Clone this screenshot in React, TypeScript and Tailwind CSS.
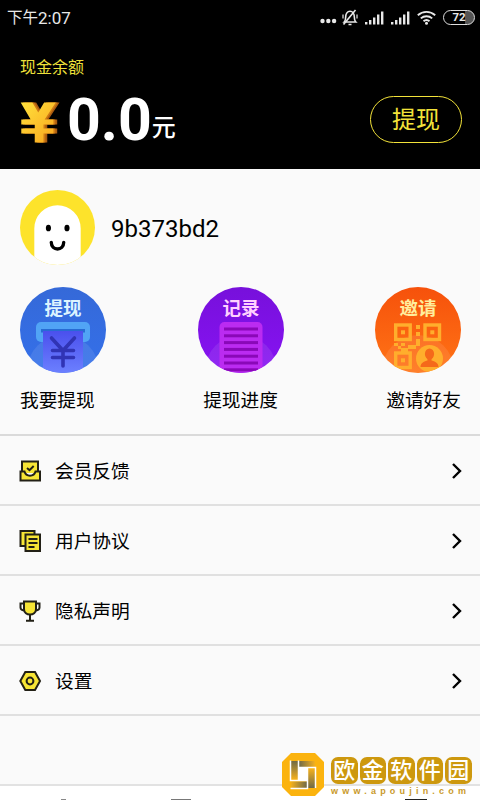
import React from "react";

const FONT = "font-[Roboto,'Noto_Sans_CJK_SC',sans-serif]";

function StatusBar() {
  return (
    <div className="flex h-9 items-center justify-between pl-[7px] pr-[5px] text-[#e8e8e8]">
      <span className="flex items-center text-[17px] leading-none">
        <span className="pt-px text-[15.5px]">下午</span>2:07
      </span>
      <div className="flex items-center pb-[2px]">
        <svg className="mt-[7px] h-[6px] w-[17px]" viewBox="0 0 17 6" fill="currentColor">
          <circle cx="2.5" cy="3" r="2.2" />
          <circle cx="8.3" cy="3" r="2.2" />
          <circle cx="14.1" cy="3" r="2.2" />
        </svg>
        <BellOff />
        <Signal />
        <Signal />
        <Wifi />
        <div className="flex h-[15px] w-[32px] items-center justify-center rounded-full border-[1.5px] border-[#dedede] bg-gradient-to-r from-black from-70% to-[#555] to-70% pt-px text-[11.5px] font-bold leading-none">
          72
        </div>
      </div>
    </div>
  );
}

function BellOff() {
  return (
    <svg className="ml-1 mr-[6px] h-[17px] w-[18px]" viewBox="0 0 18 17" fill="none" stroke="currentColor" strokeWidth="1.6">
      <path d="M3.2 13c1.400-1.400 1.500-3 1.500-5.200C4.700 4.700 6.400 2.300 9 2.300s4.300 2.400 4.300 5.500c0 2.200 .1 3.800 1.500 5.200zM7.500 15.500h3" />
      <path d="M14.500 1L2.500 15.500" strokeWidth="1.600" />
      <path d="M2 5.500v4M16 5.500v4" stroke="#8b8b8b" strokeWidth="2" />
    </svg>
  );
}

function Signal() {
  return (
    <svg className="mr-[7px] h-[15px] w-[19px]" viewBox="0 0 19 15" fill="currentColor">
      <rect x="0" y="12" width="2.4" height="2.5" />
      <rect x="4" y="10" width="2.4" height="4.5" />
      <rect x="8" y="7.5" width="2.4" height="7" />
      <rect x="12" y="4.5" width="2.4" height="10" />
      <rect x="16" y="1.5" width="2.4" height="13" />
    </svg>
  );
}

function Wifi() {
  return (
    <svg className="mr-[7px] h-[15px] w-[19px]" viewBox="0 0 19 15" fill="none" stroke="currentColor" strokeWidth="1.9">
      <path d="M.8 5.200c5-4.400 12.400-4.400 17.400 0M3.800 8.400c3.300-2.900 8.100-2.900 11.400 0M6.500 11.300c1.700-1.500 4.300-1.500 6 0" />
      <circle cx="9.5" cy="13.2" r="1.5" fill="currentColor" stroke="none" />
    </svg>
  );
}

function YuanIcon() {
  const shape = "M0 0h10l5 10L20 0h10l-9.500 17H28v5H19.500v4H28v5h-8.500v9H12v-9H.5v-5H12v-4H.5v-5h8z";
  return (
    <svg className="h-[41px] w-[40px]" viewBox="0 0 40 41">
      <defs>
        <linearGradient id="yuan" x1="0" y1="0" x2="1" y2="1">
          <stop offset="0" stopColor="#ffe13c" />
          <stop offset="1" stopColor="#f9a51d" />
        </linearGradient>
      </defs>
      <g transform="translate(.7 .5) scale(1.17 1)">
        <path d={shape} transform="translate(3.2 0)" fill="#a95b10" />
        <path d={shape} transform="translate(1.6 0)" fill="#cf7a14" />
        <path d={shape} fill="url(#yuan)" />
      </g>
    </svg>
  );
}

function Avatar() {
  return (
    <svg className="size-[75px]" viewBox="0 0 76 76">
      <clipPath id="face">
        <circle cx="38" cy="38" r="38" />
      </clipPath>
      <g clipPath="url(#face)">
        <rect width="76" height="76" fill="#fde32b" />
        <path d="M14.500 77V39a23.500 23.500 0 0 1 47 0v38z" fill="#fff" />
      </g>
      <ellipse cx="28.8" cy="38.5" rx="2.6" ry="3.4" />
      <ellipse cx="47.6" cy="38.5" rx="2.6" ry="3.4" />
      <path d="M31.700 53c0 9 12.600 9 12.600 0" fill="none" stroke="#000" strokeWidth="3.4" strokeLinecap="round" />
    </svg>
  );
}

interface DiscProps {
  id: string;
  from: string;
  to: string;
  title: string;
  titleColor: string;
  children: React.ReactNode;
}

function Disc({ id, from, to, title, titleColor, children }: DiscProps) {
  return (
    <svg className="size-[86px]" viewBox="0 0 86 86">
      <defs>
        <linearGradient id={id} x1="0" y1="0" x2="0" y2="1">
          <stop offset="0" stopColor={from} />
          <stop offset="1" stopColor={to} />
        </linearGradient>
        <clipPath id={`${id}-clip`}>
          <circle cx="43" cy="43" r="43" />
        </clipPath>
      </defs>
      <g clipPath={`url(#${id}-clip)`}>
        <rect width="86" height="86" fill={`url(#${id})`} />
        <circle cx="43" cy="84" r="36" fill="#fff" opacity=".09" />
        {children}
      </g>
      <text x="43" y="27.5" textAnchor="middle" fontSize="18.5" fontWeight="700" fill={titleColor}>
        {title}
      </text>
    </svg>
  );
}

function WithdrawDisc() {
  return (
    <Disc id="withdraw" from="#3569d8" to="#3470ea" title="提现" titleColor="#dcf3ff">
      <rect x="16" y="35" width="54" height="20" rx="5" fill="#51a4f5" />
      <rect x="21" y="42" width="44" height="3.5" fill="#276bd4" />
      <defs>
        <linearGradient id="slip" x1="0" y1="0" x2="0" y2="1">
          <stop offset="0" stopColor="#4a50ed" />
          <stop offset="1" stopColor="#6c80ff" />
        </linearGradient>
      </defs>
      <rect x="23" y="44" width="40" height="42" fill="url(#slip)" />
      <path d="M31.500 51L43 63.500 54.500 51M32.500 63.500h21M32.500 70.500h21M43 63.500V79" fill="none" stroke="#3034b5" strokeWidth="3.6" strokeLinecap="round" />
    </Disc>
  );
}

function RecordDisc() {
  return (
    <Disc id="record" from="#7710db" to="#8713f3" title="记录" titleColor="#ffd0ff">
      <rect x="21.5" y="35" width="43" height="60" rx="5" fill="#bb2bf1" />
      {[40.5, 47.3, 54.1, 60.9, 67.7, 74.5, 81.3].map((y) => (
        <rect key={y} x="26" y={y} width="34" height="3" fill="#8a08b8" />
      ))}
    </Disc>
  );
}

function InviteDisc() {
  return (
    <Disc id="invite" from="#f6510b" to="#ff7416" title="邀请" titleColor="#ffed9c">
      <g fill="none" stroke="#ffae2c" strokeWidth="3.4">
        <rect x="20.7" y="38" width="14.5" height="14.5" />
        <rect x="50" y="38" width="14.5" height="14.5" />
        <rect x="20.7" y="66" width="14.5" height="14.5" />
      </g>
      <g fill="#ffae2c">
        <rect x="26" y="43.3" width="4" height="4" />
        <rect x="55.3" y="43.3" width="4" height="4" />
        <rect x="26" y="71.3" width="4" height="4" />
        <path d="M41 38h4v4h-4zM41 45h4v4h-4zM41 52h4v7h-4zM19 56h4v3h-4zM26 56h4v3h-4zM23 59h3v3h-3zM33 58h8v4h-8zM26 61h7v4h-7z" />
      </g>
      <circle cx="54.5" cy="71.5" r="13.5" fill="#ffae2c" />
      <ellipse cx="54.5" cy="67" rx="4.6" ry="5.6" fill="#f5691a" />
      <path d="M45.500 80c0-4 4-6 7-6.500v-3h4v3c3 .5 7 2.500 7 6.500z" fill="#f5691a" />
    </Disc>
  );
}

const actions = [
  { label: "我要提现", icon: <WithdrawDisc />, align: "items-start" },
  { label: "提现进度", icon: <RecordDisc />, align: "items-center" },
  { label: "邀请好友", icon: <InviteDisc />, align: "items-end" },
];

const menu = [
  {
    label: "会员反馈",
    icon: (
      <>
        <path d="M3 13V1.500h16V13" />
        <path d="M1.500 11.500h4c1.500 5.500 9.500 5.500 11 0h4.500v9H1.500z" />
        <path d="M8 8l2.500 2.200 4.200-4.200" fill="none" />
      </>
    ),
  },
  {
    label: "用户协议",
    icon: (
      <>
        <path d="M1.500 1h14v15h-14z" />
        <path d="M6.500 4.500H21v16.500H6.500z" />
        <path d="M9.500 9h9M9.500 13h9M9.500 17h6" />
      </>
    ),
  },
  {
    label: "隐私声明",
    icon: (
      <>
        <path d="M5 3.500H1.500v4c0 2 2 3 5 3M17 3.500h3.500v4c0 2-2 3-5 3" fill="none" />
        <path d="M5 1.500h12v7.500c0 7.300-12 7.300-12 0z" />
        <path d="M11 14.500v6.200M7 20.700h8" />
      </>
    ),
  },
  {
    label: "设置",
    icon: (
      <>
        <path d="M6.300 2h9.700L21 11l-5 9H6.300L1.300 11z" />
        <circle cx="11" cy="11" r="3.4" />
      </>
    ),
  },
];

function Watermark() {
  return (
    <div className="absolute left-[281px] top-[752px] flex gap-[6px]">
      <svg className="h-[45px] w-[44px]" viewBox="0 0 44 45">
        <defs>
          <linearGradient id="shade-right">
            <stop offset="0" stopColor="#6f6a48" />
            <stop offset="1" stopColor="#f3b01e" />
          </linearGradient>
          <linearGradient id="shade-left">
            <stop offset="0" stopColor="#f3b01e" />
            <stop offset="1" stopColor="#6f6a48" />
          </linearGradient>
          <linearGradient id="shade-down" x1="0" y1="0" x2="0" y2="1">
            <stop offset="0" stopColor="#6f6a48" />
            <stop offset="1" stopColor="#f3b01e" />
          </linearGradient>
          <linearGradient id="shade-up" x1="0" y1="0" x2="0" y2="1">
            <stop offset="0" stopColor="#f3b01e" />
            <stop offset="1" stopColor="#6f6a48" />
          </linearGradient>
        </defs>
        <path d="M10 1h24l9 9v25l-9 9H10l-9-9V10z" fill="#fbb30e" />
        <path d="M18 15h8v14h-8z" fill="#fff" />
        <rect x="10" y="9" width="7" height="18" fill="url(#shade-down)" />
        <rect x="18" y="9" width="16" height="6" fill="url(#shade-right)" />
        <rect x="27" y="17" width="7" height="19" fill="url(#shade-up)" />
        <rect x="10" y="29.5" width="16" height="6.5" fill="url(#shade-left)" />
        <path d="M9.500 8.500v20H26M17.500 28.500v-20M17.500 15.500h17v20.500M26.500 15.500v21H9.500" fill="none" stroke="#fff" strokeWidth="1.5" />
      </svg>
      <div className="flex flex-col pt-[5px]">
        <div className="flex gap-[2px]">
          {["欧", "金", "软", "件", "园"].map((c) => (
            <span key={c} className="flex h-[27px] w-[26.5px] items-center justify-center rounded-[7px] bg-[#cd980e] text-[22px] font-medium leading-none text-white">
              {c}
            </span>
          ))}
        </div>
        <span className="mt-[2px] whitespace-nowrap font-['Liberation_Sans',sans-serif] text-[9px] font-bold leading-[10px] tracking-[4.2px] text-[#c99a2b]">
          www.apoujin.com
        </span>
      </div>
    </div>
  );
}

export default function App() {
  return (
    <div className={`relative flex h-[800px] w-[480px] flex-col overflow-hidden bg-[#fafafa] text-black ${FONT}`}>
      <header className="h-[169px] bg-black">
        <StatusBar />
        <div className="px-5 pt-[23px] text-[16px] leading-[18px] text-[#eee03a]">现金余额</div>
        <div className="flex items-center justify-between pl-5 pr-[18px] pt-[10px]">
          <div className="flex h-[64px] items-center text-white">
            <div className="pt-[7px]">
              <YuanIcon />
            </div>
            <span className="ml-[7px] text-[59px] font-bold leading-none">0.0</span>
            <span className="mt-[17px] text-[24px] font-medium leading-none">元</span>
          </div>
          <button className="flex h-[47px] w-[92px] items-center justify-center rounded-full border-[1.5px] border-[#f3e33a] pt-[2px] text-[24px] text-[#f3e33a]">
            提现
          </button>
        </div>
      </header>

      <section className="h-[265px] px-5 pt-[21px]">
        <div className="flex items-center gap-[16px]">
          <Avatar />
          <span className="pt-[2px] text-[24px] leading-none">9b373bd2</span>
        </div>
        <div className="-mr-px mt-[22px] flex justify-between">
          {actions.map((a) => (
            <div key={a.label} className={`flex flex-col ${a.align}`}>
              {a.icon}
              <span className="mt-[17px] text-[18.7px] leading-[22px]">{a.label}</span>
            </div>
          ))}
        </div>
      </section>

      <ul className="border-t-2 border-[#dadada]">
        {menu.map((m) => (
          <li key={m.label} className="flex h-[70px] items-center border-b-2 border-[#e0e0e0] pl-[19px] pr-[18px] pt-[2px]">
            <svg className="size-[22px]" viewBox="0 0 22 22" fill="#f7e535" stroke="#222016" strokeWidth="2" overflow="visible">
              {m.icon}
            </svg>
            <span className="ml-[14px] flex-1 pt-[3px] text-[18.7px] leading-none">{m.label}</span>
            <svg className="h-[16px] w-[10px]" viewBox="0 0 10 16" fill="none" stroke="#000" strokeWidth="2.4">
              <path d="M1 1l7 7-7 7" />
            </svg>
          </li>
        ))}
      </ul>

      <nav className="mt-auto flex h-[16px] items-end border-t-2 border-[#e2e2e2] bg-white">
        <span className="ml-[61px] h-px w-[5px] bg-[#888]" />
        <span className="ml-[105px] h-px w-[20px] bg-[#777]" />
        <span className="ml-[214px] h-px w-[22px] bg-[#222]" />
      </nav>

      <Watermark />
    </div>
  );
}
